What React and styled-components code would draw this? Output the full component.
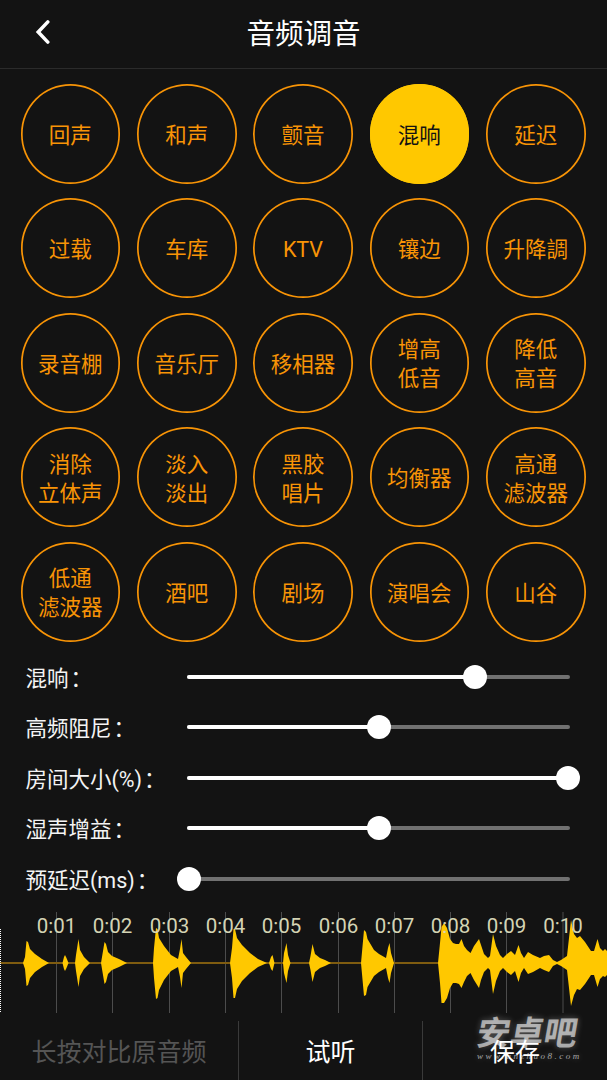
import React from 'react';
import styled, { createGlobalStyle } from 'styled-components';

const Global = createGlobalStyle`
  * { box-sizing: border-box; }
  body { margin: 0; background: #131313; }
`;

const Screen = styled.main`
  width: 607px;
  height: 1080px;
  overflow: hidden;
  display: flex;
  flex-direction: column;
  background: #131313;
  color: #f4f4f4;
  font-family: Roboto, 'Noto Sans CJK SC', sans-serif;
`;

const Header = styled.header`
  height: 69px;
  flex: none;
  display: grid;
  grid-template-columns: 84px 1fr 84px;
  align-items: center;
  border-bottom: 1px solid #2b2b2b;
`;

const BackButton = styled.button`
  height: 63px;
  padding: 0 1px 0 0;
  border: 0;
  background: none;
  display: grid;
  place-items: center;
  align-self: start;
`;

const Title = styled.h1`
  margin: 0;
  padding-top: 2px;
  text-align: center;
  font-size: 28.5px;
  font-weight: 400;
  line-height: 40px;
  color: #fff;
`;

const EffectGrid = styled.section`
  flex: none;
  height: 574px;
  padding: 15px 21px 0 20.7px;
  display: grid;
  grid-template-columns: repeat(5, 99.6px);
  grid-auto-rows: 99.6px;
  column-gap: 16.75px;
  row-gap: 14.9px;
`;

const Effect = styled.button`
  padding: 3px 0.4px 0 0;
  border: 0;
  border-radius: 50%;
  box-shadow: inset 0 0 0 1.7px ${(p) => (p.$active ? '#ffc800' : '#f89406')};
  background: ${(p) => (p.$active ? '#ffc800' : 'transparent')};
  color: ${(p) => (p.$active ? '#131313' : '#f89406')};
  font-family: inherit;
  font-size: 21.5px;
  line-height: 29px;
  white-space: pre;
`;

const Controls = styled.section`
  flex: none;
  padding: 8.6px 37px 0 25.5px;
  height: 263px;
`;

const Control = styled.label`
  height: 50.45px;
  display: grid;
  grid-template-columns: 161.5px 1fr;
  align-items: center;
`;

const ControlName = styled.span`
  padding-top: 4px;
  font-size: 21.5px;
  line-height: 30px;
  white-space: nowrap;
`;

const Colon = styled.span`
  padding-left: 2px;
`;

const Track = styled.div`
  position: relative;
  height: 4px;
  border-radius: 2px;
  background: #717171;
`;

const Fill = styled.div`
  height: 4px;
  border-radius: 2px;
  background: #fff;
`;

const Thumb = styled.div`
  position: absolute;
  top: -10px;
  width: 24px;
  height: 24px;
  margin-left: -12px;
  border-radius: 50%;
  background: #fff;
`;

const Timeline = styled.section`
  flex: none;
  height: 108px;
  padding-top: 6px;
`;

const Wave = styled.svg`
  display: block;
  text {
    font-family: Roboto, sans-serif;
    font-size: 20.5px;
    fill: #d4d4b4;
    text-anchor: middle;
  }
`;

const Footer = styled.footer`
  position: relative;
  flex: 1;
  padding-top: 7px;
  display: grid;
  grid-template-columns: 239px 184px 184px;
`;

const Action = styled.button`
  padding: 5px 0 0;
  border: 0;
  border-right: ${(p) => (p.$last ? '0' : '1px solid #3a3a3a')};
  background: none;
  color: ${(p) => (p.$muted ? '#555' : '#fff')};
  font-family: inherit;
  font-size: 25px;
  line-height: 36px;
`;

const Watermark = styled.div`
  position: absolute;
  left: 477px;
  top: 3px;
  width: 110px;
  color: rgba(255, 255, 255, 0.6);
  text-shadow: 0 0 6px rgba(255, 255, 255, 0.3);
`;

const MarkName = styled.div`
  font-size: 33.5px;
  font-weight: 700;
  line-height: 34px;
  height: 34px;
  white-space: nowrap;
  transform: skewX(-10deg);
`;

const MarkUrl = styled.div`
  font: italic 400 9px/11px 'Liberation Serif', serif;
  letter-spacing: 2.5px;
  white-space: nowrap;
`;

const effects = [
  '回声', '和声', '颤音', '混响', '延迟',
  '过载', '车库', 'KTV', '镶边', '升降調',
  '录音棚', '音乐厅', '移相器', '增高\n低音', '降低\n高音',
  '消除\n立体声', '淡入\n淡出', '黑胶\n唱片', '均衡器', '高通\n滤波器',
  '低通\n滤波器', '酒吧', '剧场', '演唱会', '山谷',
];

const controls = [
  { name: '混响', value: 75.2 },
  { name: '高频阻尼', value: 50 },
  { name: '房间大小(%)', value: 99.5 },
  { name: '湿声增益', value: 50 },
  { name: '预延迟(ms)', value: 0.5 },
];

// Each burst is a list of [x, amplitude above, amplitude below] points.
const bursts = [
  [[23, 0, 0], [25, 6, 6], [26.5, 22, 23], [28, 21, 22], [30, 14, 15], [35, 9, 9], [42, 4, 4], [49, 0, 0]],
  [[62.5, 0, 0], [64, 6, 6], [65, 8, 8], [66.5, 5, 5], [68.5, 0, 0]],
  [[75, 0, 0], [76, 8, 8], [78.5, 24, 24], [80, 13, 13], [84, 6, 6], [90, 0, 0]],
  [[101, 0, 0], [102.5, 9, 9], [104.5, 21, 21], [106, 19, 19], [108, 11, 11], [112, 7, 7], [119, 4, 4], [127, 0, 0]],
  [[153, 0, 0], [154, 15, 15], [156, 35, 36], [157.5, 34, 35], [159, 25, 27], [164, 17, 17], [171, 8, 8], [178, 4, 4], [180, 14, 14], [181.5, 24, 25], [183, 10, 10], [186, 6, 6], [191, 0, 0]],
  [[230, 0, 0], [232, 15, 15], [233.5, 34, 35], [235, 34, 35], [237, 25, 26], [242, 18, 18], [250, 10, 10], [258, 4, 4], [267, 0, 0]],
  [[269, 0, 0], [271, 6, 6], [272.5, 8, 8], [274.5, 0, 0]],
  [[283, 0, 0], [284, 10, 10], [286.5, 20, 20], [288, 8, 8], [290.5, 0, 0]],
  [[309, 0, 0], [310.5, 7, 7], [312.5, 19, 19], [315, 9, 9], [320, 5, 5], [325, 3, 3], [331, 0, 0]],
  [[361, 0, 0], [362, 11, 11], [364, 33, 33], [366, 31, 32], [367.5, 24, 24], [374, 13, 13], [379, 9, 9], [386, 5, 5], [388, 15, 15], [389.5, 20, 20], [391, 10, 10], [394, 0, 0]],
  [[438, 0, 0], [440, 20, 20], [441.5, 36, 40], [444, 40, 40], [447, 35, 35], [450, 24, 25], [453, 20, 20], [456, 19, 20], [459, 19, 21], [461.5, 24, 25], [464, 17, 19], [467, 13, 13], [470.5, 10, 10], [474, 17, 17], [479, 24, 25], [481, 18, 17], [484, 9, 9], [488, 5, 5], [490, 7, 7], [493, 29, 31], [496, 17, 18], [500, 8, 8], [503, 5, 5], [507, 9, 9], [511, 12, 12], [515, 8, 8], [518.5, 18, 19], [521, 10, 10], [524, 5, 5], [528, 11, 11], [533, 8, 9], [540, 5, 5], [544, 7, 7], [549, 8, 9], [553, 3, 3], [557, 1, 1], [561, 3, 3], [567, 7, 7], [569, 25, 25], [571, 43, 43], [574, 29, 32], [577, 25, 26], [580, 27, 27], [585, 21, 21], [591, 12, 12], [594, 12, 12], [597.5, 24, 24], [600, 15, 16], [603, 12, 13], [605, 14, 14], [607, 12, 12]],
];

const MIDLINE = 51;

const outline = (points) =>
  [
    ...points.map(([x, up]) => `${x},${MIDLINE - up}`),
    ...[...points].reverse().map(([x, , down]) => `${x},${MIDLINE + down}`),
  ].join(' ');

const ticks = [56.5, 112.5, 169.5, 225.5, 281.5, 338.5, 394.5, 450.5, 506.5, 563];

const label = (second) => `0:${String(second).padStart(2, '0')}`;

function Waveform() {
  return (
    <Wave width="607" height="101" viewBox="0 0 607 101">
      {ticks.map((x) => (
        <path key={x} d={`M${x} 0V101`} stroke="#4c4c4c" />
      ))}
      <path d="M0 51H607" stroke="#7f5c10" strokeWidth="2" />
      {bursts.map((points) => (
        <polygon key={points[0][0]} points={outline(points)} fill="#ffc800" />
      ))}
      <path d="M.5 17V101" stroke="#fff" strokeDasharray="1 1" />
      {ticks.map((x, i) => (
        <text key={x} x={x} y="20.5">{label(i + 1)}</text>
      ))}
    </Wave>
  );
}

export default function App() {
  return (
    <Screen>
      <Global />
      <Header>
        <BackButton aria-label="返回">
          <svg width="16" height="26" viewBox="0 0 16 26" fill="none" stroke="#fff" strokeWidth="3.5" strokeLinecap="round">
            <path d="M13.8 2.9L4.2 13L13.8 23.1" />
          </svg>
        </BackButton>
        <Title>音频调音</Title>
      </Header>
      <EffectGrid>
        {effects.map((name) => (
          <Effect key={name} $active={name === '混响'}>{name}</Effect>
        ))}
      </EffectGrid>
      <Controls>
        {controls.map(({ name, value }) => (
          <Control key={name}>
            <ControlName>{name}<Colon>：</Colon></ControlName>
            <Track>
              <Fill style={{ width: `${value}%` }} />
              <Thumb style={{ left: `${value}%` }} />
            </Track>
          </Control>
        ))}
      </Controls>
      <Timeline>
        <Waveform />
      </Timeline>
      <Footer>
        <Action $muted>长按对比原音频</Action>
        <Action>试听</Action>
        <Action $last>保存</Action>
        <Watermark>
          <MarkName>安卓吧</MarkName>
          <MarkUrl>www.anzhuo8.com</MarkUrl>
        </Watermark>
      </Footer>
    </Screen>
  );
}
